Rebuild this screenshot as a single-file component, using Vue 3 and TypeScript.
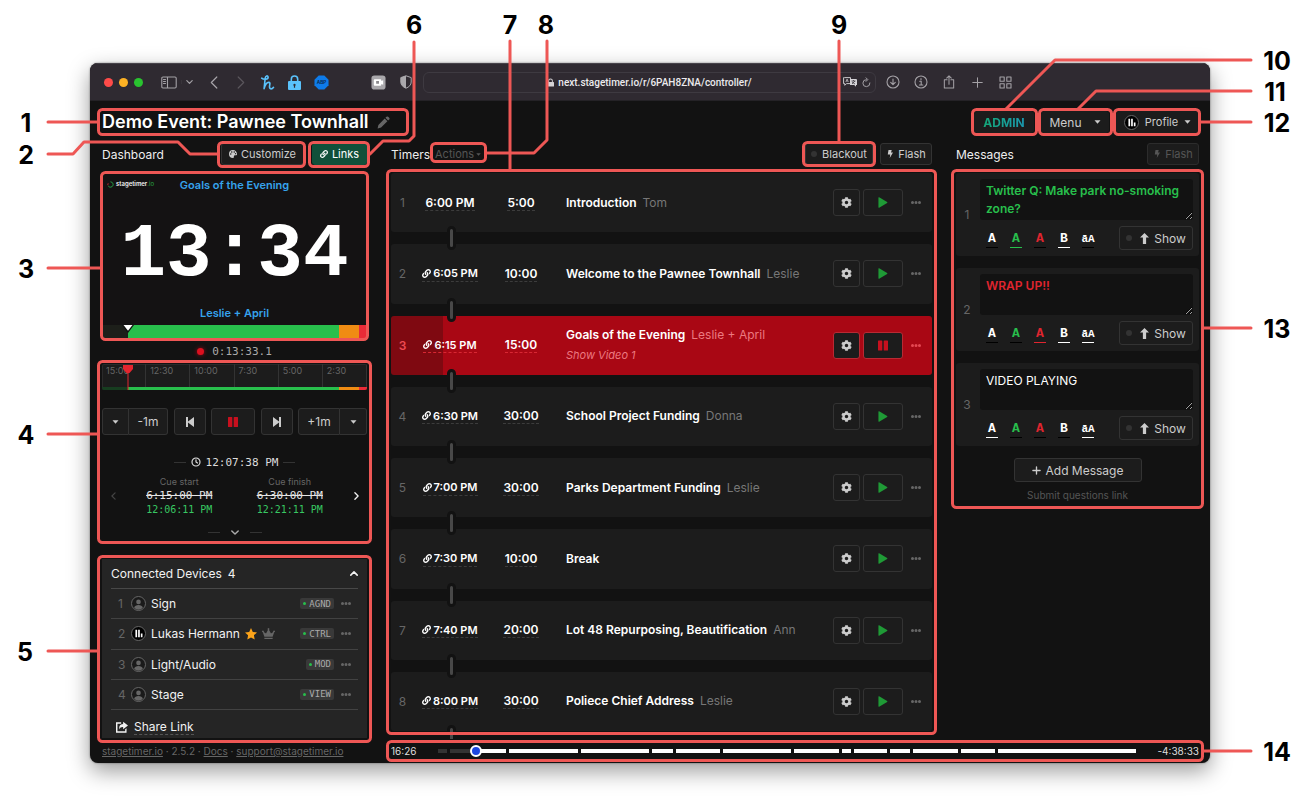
<script setup lang="ts">
import { h, ref } from 'vue'

interface Glyph { box: string; d: string; line?: number }

const glyphs: Record<string, Glyph> = {
  link: { box: '0 0 512 512', d: 'M326.612 185.391c59.747 59.809 58.927 155.698.36 214.59-.11.12-.24.25-.36.37l-67.2 67.2c-59.27 59.27-155.699 59.262-214.96 0-59.27-59.26-59.27-155.7 0-214.96l37.106-37.106c9.84-9.84 26.786-3.3 27.294 10.606.648 17.722 3.826 35.527 9.69 52.721 1.986 5.822.567 12.262-3.783 16.612l-13.087 13.087c-28.026 28.026-28.905 73.66-1.155 101.96 28.024 28.579 74.086 28.749 102.325.51l67.2-67.19c28.191-28.191 28.073-73.757 0-101.83-3.701-3.694-7.429-6.564-10.341-8.569a16.037 16.037 0 0 1-6.947-12.606c-.396-10.567 3.348-21.456 11.698-29.806l21.054-21.055c5.521-5.521 14.182-6.199 20.584-1.731a152.482 152.482 0 0 1 20.522 17.197zM467.547 44.449c-59.261-59.262-155.69-59.27-214.96 0l-67.2 67.2c-.12.12-.25.25-.36.37-58.566 58.892-59.387 154.781.36 214.59a152.454 152.454 0 0 0 20.521 17.196c6.402 4.468 15.064 3.789 20.584-1.731l21.054-21.055c8.35-8.35 12.094-19.239 11.698-29.806a16.037 16.037 0 0 0-6.947-12.606c-2.912-2.005-6.64-4.875-10.341-8.569-28.073-28.073-28.191-73.639 0-101.83l67.2-67.19c28.239-28.239 74.3-28.069 102.325.51 27.75 28.3 26.872 73.934-1.155 101.96l-13.087 13.087c-4.35 4.35-5.769 10.79-3.783 16.612 5.864 17.194 9.042 34.999 9.69 52.721.509 13.906 17.454 20.446 27.294 10.606l37.106-37.106c59.271-59.259 59.271-155.699.001-214.959z' },
  cog: { box: '0 0 512 512', d: 'M487.4 315.7l-42.6-24.6c4.3-23.2 4.3-47 0-70.2l42.6-24.6c4.9-2.8 7.1-8.6 5.5-14-11.1-35.6-30-67.8-54.7-94.6-3.8-4.1-10-5.1-14.8-2.3L380.8 110c-17.9-15.4-38.5-27.3-60.8-35.1V25.8c0-5.6-3.9-10.5-9.4-11.7-36.7-8.2-74.3-7.8-109.2 0-5.5 1.2-9.4 6.1-9.4 11.7V75c-22.2 7.9-42.8 19.8-60.8 35.1L88.7 85.5c-4.9-2.8-11-1.9-14.8 2.3-24.7 26.7-43.6 58.9-54.7 94.6-1.7 5.4.6 11.2 5.5 14L67.3 221c-4.3 23.2-4.3 47 0 70.2l-42.6 24.6c-4.9 2.8-7.1 8.6-5.5 14 11.1 35.6 30 67.8 54.7 94.6 3.8 4.1 10 5.1 14.8 2.3l42.6-24.6c17.9 15.4 38.5 27.3 60.8 35.1v49.2c0 5.6 3.9 10.5 9.4 11.7 36.7 8.2 74.3 7.8 109.2 0 5.5-1.2 9.4-6.1 9.4-11.7v-49.2c22.2-7.9 42.8-19.8 60.8-35.1l42.6 24.6c4.9 2.8 11 1.9 14.8-2.3 24.7-26.7 43.6-58.9 54.7-94.6 1.5-5.5-.7-11.3-5.6-14.1zM256 336c-44.1 0-80-35.9-80-80s35.9-80 80-80 80 35.9 80 80-35.9 80-80 80z' },
  palette: { box: '0 0 16 16', d: 'M8 0a8 8 0 1 0 0 16c1.6 0 2.2-1.2 1.8-2.4-.5-1.5.4-3 2-3H14c1.300 0 2-.9 2-2.300C16 3.500 12.400 0 8 0zM3.500 9.500a1.500 1.500 0 1 1 0-3 1.500 1.500 0 0 1 0 3zM5.500 5.500a1.500 1.500 0 1 1 0-3 1.500 1.500 0 0 1 0 3zM10.500 5.500a1.500 1.500 0 1 1 0-3 1.500 1.500 0 0 1 0 3zM13 8.500a1.200 1.200 0 1 1 0-2.400 1.200 1.200 0 0 1 0 2.400z' },
  bolt: { box: '0 0 16 16', d: 'M5 0h6.500l-1.500 5h4L7.500 16 8.500 9H3.500z' },
  pencil: { box: '0 0 16 16', d: 'M11.700 1a1.400 1.400 0 0 1 2 0L15 2.300a1.400 1.400 0 0 1 0 2L13.700 5.600 10.400 2.300zM9.500 3.200l3.300 3.300L5 14.300 1 15.300.8 15 1.700 11z' },
  caret: { box: '0 0 10 6', d: 'M.5.500h9L5 5.500z' },
  play: { box: '0 0 10 12', d: 'M0 .8Q0 0 .8.400L9.500 5.500Q10 6 9.500 6.500L.8 11.600Q0 12 0 11.200z' },
  pause: { box: '0 0 10 10', d: 'M.6 0h3.100q.600 0 .6.600v8.800q0 .6-.6.600H.6Q0 10 0 9.400V.6Q0 0 .6 0zM6.300 0h3.100q.6 0 .6.600v8.800q0 .6-.6.600H6.300q-.600 0-.6-.6V.6q0-.6.6-.6z' },
  prev: { box: '0 0 8 10', d: 'M0 0h2v4.400L8 0v10L2 5.600V10H0z' },
  next: { box: '0 0 8 10', d: 'M8 0H6v4.400L0 0v10l6-4.400V10h2z' },
  dots: { box: '0 0 10 3', d: 'M1.500 0a1.500 1.500 0 1 1 0 3 1.500 1.500 0 0 1 0-3zM5 0a1.500 1.500 0 1 1 0 3 1.500 1.500 0 0 1 0-3zM8.500 0a1.500 1.500 0 1 1 0 3 1.500 1.500 0 0 1 0-3z' },
  up: { box: '0 0 10 12', d: 'M5 0l5 5H6.800v7H3.200V5H0z' },
  plus: { box: '0 0 10 10', d: 'M5 1v8M1 5h8', line: 1.5 },
  back: { box: '0 0 8 13', d: 'M6.800 1L1.300 6.500 6.800 12', line: 1.2 },
  forward: { box: '0 0 8 13', d: 'M1.200 1L6.700 6.500 1.200 12', line: 1.2 },
  chevronLeft: { box: '0 0 6 10', d: 'M5 1L1 5l4 4', line: 1.5 },
  chevronRight: { box: '0 0 6 10', d: 'M1 1l4 4-4 4', line: 1.6 },
  chevronDown: { box: '0 0 10 6', d: 'M1 1l4 4 4-4', line: 1.8 },
  chevronUp: { box: '0 0 10 6', d: 'M1 5l4-4 4 4', line: 2 },
  clock: { box: '0 0 10 10', d: 'M5 1a4 4 0 1 0 0 8 4 4 0 0 0 0-8zM5 2.800V5l1.500 1', line: 1.2 },
  star: { box: '0 0 12 12', d: 'M6 0l1.800 3.900 4.200.5-3.100 2.900.8 4.200L6 9.500l-3.700 2 .8-4.200L0 4.400l4.200-.5z' },
  crown: { box: '0 0 14 12', d: 'M2.500 10.500h9V12h-9zM2.500 9.500L.8 4.700A1 1 0 1 1 1.700 4.400L4.300 6 6.500 2a1 1 0 1 1 1 0L9.700 6l2.600-1.600a1 1 0 1 1 .9.300L11.500 9.500z' },
  share: { box: '0 0 14 14', d: 'M8.300 1L14 5.300 8.300 9.600V7.100C5.600 7 4.700 8 4.200 9.800 3 6.500 4.600 3.600 8.300 3.500zM6 1.500v1.600H1.700V12h9V9.600l1.600-1.100v5.100H0V1.500z' },
  user: { box: '0 0 14 14', d: 'M7 2.800a2.500 2.500 0 1 1 0 5 2.500 2.500 0 0 1 0-5zM2.300 11.700C2.800 9.300 4.700 8.500 7 8.500s4.200.8 4.700 3.200A6.600 6.600 0 0 1 7 13.700a6.600 6.600 0 0 1-4.700-2z' },
  bars: { box: '0 0 14 14', d: 'M3.700 3h1.800v8H3.700zM6.600 3h1.800v8H6.600zM9.500 7h1.800v4H9.500z' },
  lock: { box: '0 0 12 14', d: 'M2 6V4.200a4 4 0 0 1 8 0V6h1q1 0 1 1v6q0 1-1 1H1q-1 0-1-1V7q0-1 1-1zM3.600 6h4.800V4.200a2.400 2.400 0 0 0-4.800 0z' },
  keyLock: { box: '0 0 13 15', d: 'M2.500 6V4.200a4 4 0 0 1 8 0V6H12q1 0 1 1v7q0 1-1 1H1q-1 0-1-1V7q0-1 1-1zM4.100 6h4.800V4.200a2.400 2.400 0 0 0-4.800 0zM6.500 8.700a1.200 1.200 0 0 0-.6 2.200V12.800h1.200v-1.900a1.200 1.200 0 0 0-.6-2.200z' },
  sidebar: { box: '0 0 16 13', d: 'M2 1h12q1.200 0 1.200 1.200v8.600Q15.200 12 14 12H2Q.8 12 .8 10.800V2.200Q.8 1 2 1zM6.500 1v11M2.500 3.500h2M2.500 5.500h2M2.500 7.500h2', line: 1.1 },
  honey: { box: '0 0 14 15', d: 'M1.200 3.200C3 4.800 7.800 4.800 7.600 2.200 7.400.2 5 .6 4.700 3L3.600 13.600C4.600 9.800 6.200 7.400 8.200 7.400c2.300 0 .6 2.900.8 4.700.2 2.300 2.600 2.300 4 .2', line: 1.6 },
  reload: { box: '0 0 10 12', d: 'M8.800 6.500A3.900 3.900 0 1 1 5 2.800M4.500.8L6.500 2.800 4.500 4.800', line: 1.1 },
  download: { box: '0 0 14 14', d: 'M7 1a6 6 0 1 0 0 12A6 6 0 0 0 7 1zM7 4v5.500M4.700 7.400L7 9.700l2.300-2.300', line: 1.1 },
  info: { box: '0 0 14 14', d: 'M7 1a6 6 0 1 0 0 12A6 6 0 0 0 7 1zM5.700 6.200H7.200V10M5.400 10h3.400M7 3.600v1.200', line: 1.1 },
  upload: { box: '0 0 12 15', d: 'M4 5H1v9h10V5H8M6 10V1M3.500 3.300L6 .9l2.500 2.400', line: 1.1 },
  tabPlus: { box: '0 0 12 12', d: 'M6 .8v10.400M.8 6h10.400', line: 1.1 },
  grid: { box: '0 0 13 13', d: 'M1 1h4.200v4.200H1zM7.800 1H12v4.200H7.800zM1 7.800h4.200V12H1zM7.800 7.800H12V12H7.800z', line: 1.1 },
}

const Icon = (props: { name: string }) => {
  const g = glyphs[props.name]
  const paint = g.line
    ? { fill: 'none', stroke: 'currentColor', 'stroke-width': g.line, 'stroke-linecap': 'round', 'stroke-linejoin': 'round' }
    : { fill: 'currentColor', 'fill-rule': 'evenodd' }
  return h('svg', { viewBox: g.box, 'aria-hidden': 'true' }, [h('path', { d: g.d, ...paint })])
}
Icon.props = ['name']

const address = ref('next.stagetimer.io/r/6PAH8ZNA/controller/')

const timers = [
  { time: '6:00 PM', length: '5:00', title: 'Introduction', who: 'Tom' },
  { time: '6:05 PM', length: '10:00', title: 'Welcome to the Pawnee Townhall', who: 'Leslie', linked: true },
  { time: '6:15 PM', length: '15:00', title: 'Goals of the Evening', who: 'Leslie + April', linked: true, note: 'Show Video 1', active: true },
  { time: '6:30 PM', length: '30:00', title: 'School Project Funding', who: 'Donna', linked: true },
  { time: '7:00 PM', length: '30:00', title: 'Parks Department Funding', who: 'Leslie', linked: true },
  { time: '7:30 PM', length: '10:00', title: 'Break', who: '', linked: true },
  { time: '7:40 PM', length: '20:00', title: 'Lot 48 Repurposing, Beautification', who: 'Ann', linked: true },
  { time: '8:00 PM', length: '30:00', title: 'Poliece Chief Address', who: 'Leslie', linked: true },
]

const messages = ref([
  { text: 'Twitter Q: Make park no-smoking zone?', tone: 'green', bold: true, caps: false },
  { text: 'WRAP UP!!', tone: 'red', bold: true, caps: true },
  { text: 'VIDEO PLAYING', tone: 'white', bold: false, caps: true },
])

const devices = [
  { name: 'Sign', role: 'AGND' },
  { name: 'Lukas Hermann', role: 'CTRL', owner: true },
  { name: 'Light/Audio', role: 'MOD' },
  { name: 'Stage', role: 'VIEW' },
]

const marks = ['15:00', '12:30', '10:00', '7:30', '5:00', '2:30']

const progress = ref(46)
const segments = [
  { size: 9, played: 100 }, { size: 57, played: 46 }, { size: 69 }, { size: 69 }, { size: 21 },
  { size: 45 }, { size: 69 }, { size: 45 }, { size: 9 }, { size: 33 }, { size: 21 },
  { size: 45 }, { size: 34 }, { size: 140 },
]

const frames = [
  [98, 109, 309, 25], [218, 142, 86, 24], [309, 142, 59, 24], [101, 172, 266, 167],
  [98, 361, 272, 181], [98, 556, 272, 185], [387, 170, 548, 563], [431, 143, 54, 18],
  [803, 142, 71, 23], [972, 109, 64, 25], [1039, 109, 72, 25], [1114, 109, 85, 25],
  [952, 170, 250, 337], [387, 741, 815, 19],
]
const leaders = [
  'M48 122H98', 'M48 154H73L84 142H178L190 154H218', 'M48 268H101', 'M48 434H98', 'M48 651H98',
  'M414 42V136L409 141H383L370 154', 'M510 41V170', 'M547 41V140L534 153H486', 'M839 41V142',
  'M1251 60H1055L1006 109', 'M1251 91H1096L1078 109', 'M1251 122H1200', 'M1203 328H1251', 'M1203 751H1251',
]
const labels: [string, number, number][] = [
  ['1', 26, 131], ['2', 26, 163], ['3', 26, 277], ['4', 26, 443], ['5', 25, 660],
  ['6', 414, 33], ['7', 510, 33], ['8', 546, 33], ['9', 839, 33],
  ['10', 1277, 69], ['11', 1275, 100], ['12', 1277, 131], ['13', 1277, 337], ['14', 1277, 760],
]
</script>

<template>
  <div class="stage">
    <div class="window">
      <div class="toolbar">
        <div class="lights"><i class="close"></i><i class="mini"></i><i class="full"></i></div>
        <button class="tb side" aria-label="Sidebar"><Icon name="sidebar" /></button>
        <button class="tb drop" aria-label="Tab groups"><Icon name="chevronDown" /></button>
        <div class="slots">
          <button class="tb nav" aria-label="Back"><Icon name="back" /></button>
          <button class="tb nav dim" aria-label="Forward"><Icon name="forward" /></button>
          <button class="tb blue" aria-label="Coupons"><Icon name="honey" /></button>
          <button class="tb blue key" aria-label="Passwords"><Icon name="keyLock" /></button>
          <button class="tb" aria-label="Ad blocker"><svg viewBox="0 0 16 16"><path d="M5 .5h6L15.500 5v6L11 15.500H5L.5 11V5z" fill="#0e7bea" /><text x="8" y="10" text-anchor="middle" class="abp">ABP</text></svg></button>
        </div>
        <div class="slots second">
          <button class="tb" aria-label="Camera"><svg viewBox="0 0 16 16"><rect x=".5" y=".5" width="15" height="15" rx="3" fill="#a9a7ab" /><path d="M4 4.500h6q1 0 1 1v1l2-1v5l-2-1v1q0 1-1 1H4q-1 0-1-1v-5q0-1 1-1z" fill="#fff" /><path d="M5.500 6.300h3v3h-3z" fill="#8b898d" /></svg></button>
          <button class="tb shield" aria-label="Privacy report"><svg viewBox="0 0 12 14"><path d="M6 .8L11.200 2.600V7c0 3-2.200 5-5.200 6.200C3 12 .8 10 .8 7V2.600z" fill="none" stroke="#aaa8ac" /><path d="M6 .8V13.200C3 12 .8 10 .8 7V2.600z" fill="#aaa8ac" /></svg></button>
        </div>
        <div class="address">
          <span></span>
          <label class="url"><Icon name="lock" /><input v-model="address" type="text" aria-label="Address" /></label>
          <span class="inside">
            <button class="tb translate" aria-label="Translate"><svg viewBox="0 0 14 10"><path d="M1.500.6h6v6h-4L1.800 8.300V6.600H.6V.6z" fill="none" stroke="#c9c7cb" /><path d="M2.800 5l1.300-3L5.300 5M3.300 4h1.500" fill="none" stroke="#c9c7cb" stroke-width=".7" /><path d="M7 2h6q1 0 1 1v5h-1v1.800L11.200 8H7z" fill="#d5d3d7" /><path d="M8.500 4h4M10.500 3v1M9 7l3-3M9 5l3 2" stroke="#2f2b32" stroke-width=".7" /></svg></button>
            <button class="tb reload" aria-label="Reload"><Icon name="reload" /></button>
          </span>
        </div>
        <div class="slots end">
          <button v-for="n in ['download', 'info', 'upload', 'tabPlus', 'grid']" :key="n" class="tb" :class="n" :aria-label="n"><Icon :name="n" /></button>
        </div>
      </div>

      <main class="app">
        <header class="top">
          <h1>Demo Event: Pawnee Townhall</h1>
          <button class="plain pencil" aria-label="Rename"><Icon name="pencil" /></button>
          <div class="account">
            <button class="btn admin"><span>ADMIN</span></button>
            <button class="btn menu">Menu<Icon name="caret" class="caret" /></button>
            <button class="btn profile"><span class="avatar logo"><Icon name="bars" /></span>Profile<Icon name="caret" class="caret" /></button>
          </div>
        </header>

        <div class="columns">
          <section class="column">
            <div class="bar">
              <h2>Dashboard</h2>
              <button class="btn small push customize"><Icon name="palette" />Customize</button>
              <button class="btn small links"><Icon name="link" />Links</button>
            </div>

            <div class="preview">
              <div class="brand"><svg viewBox="0 0 10 10"><path d="M5 1.200A3.800 3.800 0 1 1 1.800 7.200" fill="none" stroke="#25b14b" stroke-width="1.300" /><path d="M1.300 6A3.800 3.800 0 0 1 1.700 3.300" fill="none" stroke="#d32f2f" stroke-width="1.300" /></svg>stagetimer<em>.io</em></div>
              <p class="caption">Goals of the Evening</p>
              <p class="count">13:34</p>
              <p class="caption">Leslie + April</p>
              <div class="track"><i class="past"></i><i class="go"></i><i class="warn"></i><i class="stop"></i><svg class="pin" viewBox="0 0 12 8"><path d="M0 0h12L6 8z" fill="#111" /><path d="M1.500 0h9L6 5.800z" fill="#fff" /></svg></div>
            </div>

            <div class="elapsed"><i></i>0:13:33.1</div>

            <div class="ruler">
              <span v-for="m in marks" :key="m">{{ m }}</span>
              <div class="track"><i class="past"></i><i class="go"></i><i class="warn"></i><i class="stop"></i></div>
              <svg class="head" viewBox="0 0 12 26"><path d="M1 1h10v4L7.500 9H6.500v17h-1V9h-1L1 5z" fill="#e5252f" /></svg>
            </div>

            <div class="controls">
              <div class="pair"><button class="btn thin" aria-label="Less options"><Icon name="caret" class="caret" /></button><button class="btn step">-1m</button></div>
              <button class="btn skip" aria-label="Previous"><Icon name="prev" /></button>
              <button class="btn hold" aria-label="Pause"><Icon name="pause" /></button>
              <button class="btn skip" aria-label="Next"><Icon name="next" /></button>
              <div class="pair"><button class="btn step more">+1m</button><button class="btn thin" aria-label="More options"><Icon name="caret" class="caret" /></button></div>
            </div>

            <div class="now"><hr /><Icon name="clock" /><span>12:07:38 PM</span><hr /></div>

            <div class="cues">
              <button class="plain off" aria-label="Previous cue"><Icon name="chevronLeft" /></button>
              <div><small>Cue start</small><s>6:15:00 PM</s><b>12:06:11 PM</b></div>
              <div><small>Cue finish</small><s>6:30:00 PM</s><b>12:21:11 PM</b></div>
              <button class="plain" aria-label="Next cue"><Icon name="chevronRight" /></button>
            </div>

            <div class="fold"><hr /><button class="plain" aria-label="Expand"><Icon name="chevronDown" /></button><hr /></div>

            <div class="devices">
              <div class="heading"><h3>Connected Devices</h3><span>4</span><button class="plain push" aria-label="Collapse"><Icon name="chevronUp" /></button></div>
              <div v-for="(d, i) in devices" :key="d.name" class="device">
                <span class="index">{{ i + 1 }}</span>
                <span class="avatar" :class="{ logo: d.owner }"><Icon :name="d.owner ? 'bars' : 'user'" /></span>
                <span>{{ d.name }}</span>
                <template v-if="d.owner"><Icon name="star" class="star" /><Icon name="crown" class="crown" /></template>
                <span class="role push"><i></i>{{ d.role }}</span>
                <button class="plain dots" aria-label="Device options"><Icon name="dots" /></button>
              </div>
              <div class="sharing"><Icon name="share" /><a href="#share">Share Link</a></div>
            </div>
          </section>

          <section class="column">
            <div class="bar">
              <h2>Timers</h2>
              <button class="plain actions">Actions<Icon name="caret" class="caret" /></button>
              <button class="btn small push blackout"><i class="led"></i>Blackout</button>
              <button class="btn small flash"><Icon name="bolt" />Flash</button>
            </div>
            <ol class="timers">
              <li v-for="(t, i) in timers" :key="t.time" :class="{ active: t.active }">
                <span class="index">{{ i + 1 }}</span>
                <span class="cell"><span class="dash" :class="{ linked: t.linked }"><Icon v-if="t.linked" name="link" />{{ t.time }}</span></span>
                <span class="cell"><span class="dash">{{ t.length }}</span></span>
                <div class="name"><p><b>{{ t.title }}</b><span>{{ t.who }}</span></p><p v-if="t.note" class="note">{{ t.note }}</p></div>
                <button class="btn gear" aria-label="Settings"><Icon name="cog" /></button>
                <button class="btn run" :aria-label="t.active ? 'Pause' : 'Start'"><Icon :name="t.active ? 'pause' : 'play'" /></button>
                <button class="plain dots" aria-label="Timer options"><Icon name="dots" /></button>
                <i class="joint"></i>
              </li>
            </ol>
          </section>

          <section class="column">
            <div class="bar">
              <h2>Messages</h2>
              <button class="btn small push flash faint" disabled><Icon name="bolt" />Flash</button>
            </div>
            <div class="messages">
              <article v-for="(m, i) in messages" :key="i" class="message">
                <span class="index">{{ i + 1 }}</span>
                <div class="editor">
                  <textarea v-model="m.text" :class="[m.tone, { bold: m.bold }]" :aria-label="'Message ' + (i + 1)"></textarea>
                  <div class="tools">
                    <button class="tool white" :class="{ on: m.tone === 'white' }">A</button>
                    <button class="tool green" :class="{ on: m.tone === 'green' }">A</button>
                    <button class="tool red" :class="{ on: m.tone === 'red' }">A</button>
                    <button class="tool white" :class="{ on: m.bold }">B</button>
                    <button class="tool white" :class="{ on: m.caps }">āA</button>
                    <button class="btn show push"><i class="led"></i><Icon name="up" />Show</button>
                  </div>
                </div>
              </article>
              <button class="btn add"><Icon name="plus" />Add Message</button>
              <a class="submit" href="#questions">Submit questions link</a>
            </div>
          </section>
        </div>

        <footer class="bottom">
          <p class="about"><a href="#home">stagetimer.io</a> · 2.5.2 · <a href="#docs">Docs</a> · <a href="#support">support@stagetimer.io</a></p>
          <div class="overall">
            <span>16:26</span>
            <div class="segments">
              <i v-for="(s, i) in segments" :key="i" :style="{ flexGrow: s.size }"><u :style="{ width: (s.played ?? 0) + '%' }"></u></i>
              <input v-model="progress" type="range" min="0" max="1000" aria-label="Event progress" />
            </div>
            <span class="left">-4:38:33</span>
          </div>
        </footer>
      </main>
    </div>

    <svg class="callouts" viewBox="0 0 1300 800" preserveAspectRatio="xMidYMin meet">
      <g fill="none" stroke="#ee5755" stroke-width="3" stroke-linecap="round" stroke-linejoin="round">
        <path v-for="l in leaders" :key="l" :d="l" />
        <rect v-for="(f, i) in frames" :key="i" :x="f[0] + 0.5" :y="f[1] + 0.5" :width="f[2]" :height="f[3]" rx="4" />
      </g>
      <text v-for="l in labels" :key="l[0]" :x="l[1]" :y="l[2] + 1" text-anchor="middle">{{ l[0] }}</text>
    </svg>
  </div>
</template>

<style>
body { margin: 0; background: #fff; }
</style>

<style scoped>
* { box-sizing: border-box; }
.stage { position: relative; display: flex; min-height: 100vh; padding: 63px 90px 37px; font-family: Inter, "Open Sans", sans-serif; font-size: 12px; color: #f2f2f2; }
h1, h2, h3, p, ol, hr { margin: 0; padding: 0; font-weight: 400; }
button { font: inherit; color: inherit; padding: 0; margin: 0; border: 0; background: none; display: flex; align-items: center; justify-content: center; white-space: nowrap; }
svg { display: block; flex: none; }
a { color: inherit; }
hr { border: 0; height: 1px; background: #333; }
.push { margin-left: auto; }

.window { flex: 1; display: flex; flex-direction: column; min-width: 0; border-radius: 8px; overflow: hidden; background: #121212; box-shadow: 0 8px 22px rgba(0, 0, 0, .4), 0 0 2px rgba(0, 0, 0, .5); }

.toolbar { display: flex; align-items: center; height: 38px; padding: 0 191px 0 14px; background: #2f2a31; border-top: 1px solid #47434a; border-bottom: 1px solid #242226; }
.lights { display: flex; gap: 6px; }
.lights i { width: 9px; height: 9px; border-radius: 50%; }
.close { background: #fe4b49; }
.mini { background: #fdb124; }
.full { background: #29c32f; }
.tb { color: #a4a1a6; }
.side { margin-left: 18px; }
.side svg { width: 16px; height: 13px; }
.drop { width: 15px; margin-left: 4px; border-left: 1px solid #39353b; }
.drop svg { width: 7px; height: 4px; }
.slots { display: flex; margin-left: 4px; }
.slots .tb { width: 27px; }
.slots svg { width: 15px; height: 15px; }
.slots .nav svg { width: 8px; height: 13px; }
.slots .dim { color: #59555b; }
.slots .blue { color: #5ac2fb; }
.slots .key svg { width: 13px; height: 15px; }
.slots .shield svg { width: 12px; height: 14px; }
.abp { font: 700 5px Inter, sans-serif; fill: #0a2c59; }
.second { margin: 0 4px 0 30px; }
.address { flex: 1; display: grid; grid-template-columns: 1fr auto 1fr; align-items: center; height: 21px; border: 1px solid #3e3a41; border-radius: 6px; }
.url { display: flex; align-items: center; gap: 4px; color: #d5d3d6; }
.url svg { width: 7px; height: 9px; }
.url input { field-sizing: content; padding: 0; border: 0; background: none; font: 500 10px Roboto, sans-serif; color: #eceaed; outline: 0; }
.inside { display: flex; justify-content: flex-end; align-items: center; gap: 5px; padding-right: 4px; }
.translate svg { width: 14px; height: 10px; }
.reload svg { width: 9px; height: 11px; }
.end { margin-left: 3px; }
.end .tb { width: 28px; }
.end svg { width: 14px; height: 14px; }
.end .tabPlus svg { width: 11px; height: 11px; }
.end .grid svg { width: 13px; height: 13px; }

.app { flex: 1; display: flex; flex-direction: column; padding: 7px 11px 0 12px; }
.top { display: flex; align-items: center; height: 28px; }
h1 { font-size: 18px; font-weight: 600; line-height: 28px; color: #fff; }
.pencil { margin-left: 8px; color: #666; }
.pencil svg { width: 13px; height: 13px; }
.btn { border: 1px solid #333; border-radius: 3px; background: #1c1c1c; color: #ccc; }
.caret { width: 7px; height: 4px; }
.account { display: flex; gap: 7px; margin-left: auto; }
.account .btn { height: 22px; border-color: #1c1c1c; }
.admin { width: 60px; font-size: 12px; font-weight: 700; }
.admin span { background: linear-gradient(90deg, #14a878, #1a98b0); background-clip: text; color: transparent; }
.menu { width: 68px; gap: 12px; font-size: 12px; }
.profile { width: 83px; gap: 6px; font-size: 11px; }
.avatar { display: flex; align-items: center; justify-content: center; width: 15px; height: 15px; border: 1px solid #666; border-radius: 50%; background: #1a1a1a; color: #666; }
.avatar svg { width: 13px; height: 13px; }
.avatar.logo { background: #000; color: #fff; }

.columns { flex: 1; display: grid; grid-template-columns: 265px 1fr 243px; gap: 24px; padding-top: 7px; }
.column { display: flex; flex-direction: column; min-width: 0; }
.bar { display: flex; align-items: center; height: 22px; margin-bottom: 8px; }
h2 { font-size: 12px; color: #eee; }
.small { height: 22px; gap: 4px; font-size: 11px; }
.small svg { width: 8px; height: 8px; }
.customize { width: 83px; }
.links { width: 55px; margin-left: 8px; background: #11503a; border-color: #11503a; color: #fff; }
.actions { margin-left: 5px; gap: 2px; font-size: 11px; color: #555; }
.actions .caret { width: 5px; height: 3px; }
.led { width: 6px; height: 6px; border-radius: 50%; background: #333; }
.blackout { width: 68px; gap: 5px; }
.flash { width: 52px; margin-left: 7px; }
.flash.push { margin-left: auto; }
.faint { color: #555; border-color: #2c2c2c; }

.preview { position: relative; display: flex; flex-direction: column; height: 165px; background: #141213; text-align: center; }
.brand { position: absolute; top: 7px; left: 5px; display: flex; align-items: center; gap: 2px; font-size: 6px; font-weight: 600; line-height: 8px; }
.brand svg { width: 7px; height: 7px; }
.brand em { margin-left: -2px; font-style: normal; font-weight: 400; color: #28a745; }
.caption { font-size: 11px; font-weight: 600; line-height: 24px; color: #36a3ec; }
.count { flex: 1; padding-top: 12px; font: 700 76px/92px "Liberation Mono", monospace; color: #fff; }
.track { display: flex; }
.track i:nth-child(1) { flex: 26; }
.track i:nth-child(2) { flex: 211; }
.track i:nth-child(3) { flex: 20; }
.track i:nth-child(4) { flex: 8; }
.past { background: #1d1f1a; }
.go { background: #28bf4c; }
.warn { background: #f08c13; }
.stop { background: #e92b37; }
.preview .track { position: relative; height: 13px; }
.pin { position: absolute; left: 20px; top: 0; width: 12px; height: 8px; }
.elapsed { display: flex; align-items: center; justify-content: center; gap: 8px; height: 26px; font: 11px "DejaVu Sans Mono", monospace; color: #aaa; }
.elapsed i { width: 7px; height: 7px; border-radius: 50%; background: #dc101f; box-shadow: 0 0 4px #a00a16; }
.ruler { position: relative; display: grid; grid-template-columns: repeat(6, 1fr); height: 26px; border-radius: 2px; overflow: hidden; background: #1c1c1c; box-shadow: inset 0 0 0 1px #2a2a2a; font-size: 9px; line-height: 13px; color: #666; }
.ruler > span { padding-left: 4px; border-right: 1px solid #333; }
.ruler .track { position: absolute; left: 0; right: 0; bottom: 0; height: 3px; }
.ruler .past { background: #173d20; }
.head { position: absolute; left: 20px; top: 0; width: 12px; height: 26px; }
.controls { display: flex; justify-content: space-between; margin-top: 18px; }
.controls .btn { height: 27px; }
.pair { display: flex; }
.pair .btn:first-child { border-radius: 3px 0 0 3px; }
.pair .btn:last-child { border-radius: 0 3px 3px 0; border-left: 0; }
.thin { width: 27px; }
.step { width: 39px; font-size: 12px; }
.more { width: 42px; }
.skip { width: 32px; }
.skip svg { width: 8px; height: 10px; }
.hold { width: 44px; color: #c8101e; }
.hold svg { width: 10px; height: 10px; }
.now { display: flex; align-items: center; justify-content: center; gap: 5px; height: 20px; margin-top: 17px; font: 11px "DejaVu Sans Mono", monospace; color: #ddd; }
.now svg { width: 10px; height: 10px; }
.now hr, .fold hr { width: 12px; }
.cues { display: grid; grid-template-columns: 22px 1fr 1fr 22px; margin-top: 3px; text-align: center; line-height: 14px; }
.cues div { display: flex; flex-direction: column; }
.cues small { font-size: 9px; color: #666; }
.cues s { font: 11px/14px "DejaVu Sans Mono", monospace; color: #e5e5e5; }
.cues b { font: 10px/14px "DejaVu Sans Mono", monospace; color: #38c762; }
.cues svg { width: 5px; height: 8px; }
.cues .off { color: #444; }
.fold { display: flex; align-items: center; justify-content: center; gap: 11px; height: 16px; margin-top: 7px; }
.fold svg { width: 8px; height: 5px; color: #aaa; }

.devices { flex: 1; display: flex; flex-direction: column; margin: 19px 0 1px; padding: 0 9px; background: #252525; }
.heading { display: flex; align-items: center; gap: 6px; height: 30px; border-bottom: 1px solid #484848; }
h3 { font-size: 12px; }
.heading svg { width: 8px; height: 5px; }
.device { flex: 1; display: flex; align-items: center; gap: 5px; padding: 0 7px; border-bottom: 1px solid #424242; }
.index { color: #666; }
.device .index { width: 8px; }
.star { width: 12px; height: 12px; color: #faa31a; }
.crown { width: 13px; height: 11px; color: #666; }
.role { display: flex; align-items: center; gap: 3px; height: 11px; padding: 0 3px; border-radius: 2px; background: #393939; font: 9px "DejaVu Sans Mono", monospace; color: #aaa; }
.role i { width: 3px; height: 3px; border-radius: 50%; background: #28bf4c; }
.dots { color: #666; }
.dots svg { width: 10px; height: 3px; }
.device .dots { margin-left: 2px; }
.sharing { display: flex; align-items: center; gap: 6px; height: 28px; padding: 6px 0 0 5px; }
.sharing svg { width: 12px; height: 12px; }
.sharing a { text-decoration: none; border-bottom: 1px dashed #555; line-height: 15px; }

.timers { flex: 1; display: flex; flex-direction: column; gap: 12px; padding-bottom: 8px; overflow: hidden; list-style: none; }
.timers li { position: relative; flex: 1; display: grid; grid-template-columns: 23px 72px 70px 1fr 27px 43px 18px; align-items: center; padding-right: 11px; border-radius: 3px; background: #1c1c1c; }
.timers .index { text-align: center; }
.cell { text-align: center; font-weight: 600; color: #fff; }
.dash { display: inline-flex; align-items: center; gap: 2px; height: 16px; border-bottom: 1px dashed #3c3c3c; }
.linked { font-size: 11px; }
.linked svg { width: 9px; height: 9px; }
.name { padding-left: 10px; white-space: nowrap; color: #777; }
.name p { line-height: 20px; }
.name b { margin-right: 6px; font-weight: 600; color: #fff; }
.name .note { font-size: 11px; font-style: italic; }
.gear, .run { height: 27px; }
.gear svg { width: 11px; height: 11px; }
.run { width: 40px; margin-left: 3px; color: #1f9a36; }
.run svg { width: 10px; height: 11px; }
.timers .dots { margin-left: 8px; }
.timers .active { background: linear-gradient(90deg, #7f0911 52px, #a90714 52px); }
.active .index { color: #ee4952; font-weight: 600; }
.active .dash { border-color: #d82733; }
.active .name { color: #ec7980; }
.active .name b { color: #fff; }
.active .btn { border-color: #b82a33; }
.active .run { color: #c8101e; }
.timers .active .dots { color: #e54852; }
.joint { position: absolute; left: 56px; bottom: -18px; z-index: 1; width: 9px; height: 24px; border: 3px solid #121212; border-radius: 5px; background: #484848; }

.messages { display: flex; flex-direction: column; align-items: stretch; gap: 12px; }
.message { display: flex; align-items: center; gap: 8px; padding: 6px; border-radius: 3px; background: #1c1c1c; }
.message .index { width: 10px; text-align: center; }
.editor { flex: 1; min-width: 0; }
textarea { display: block; width: 100%; height: 41px; padding: 3px 6px; border: 0; border-radius: 3px; background: #121212; font: 12px/18px Inter, sans-serif; resize: vertical; overflow: hidden; outline: 0; color-scheme: dark; }
textarea.bold { font-weight: 600; }
.white { color: #fff; }
.green { color: #28bf4c; }
.red { color: #e0252f; }
.tools { display: flex; align-items: center; gap: 12px; margin-top: 6px; padding-left: 6px; }
.tool { width: 12px; height: 17px; margin-top: 2px; border-bottom: 1px solid #000; font: 700 13px "Liberation Mono", monospace; }
.tool:nth-child(5) { font-size: 11px; }
.tool.on { border-color: currentColor; }
.show { width: 74px; height: 24px; gap: 5px; }
.show .led { margin-right: 3px; }
.show svg { width: 9px; height: 11px; }
.add { align-self: center; width: 128px; height: 24px; gap: 5px; }
.add svg { width: 9px; height: 9px; }
.submit { align-self: center; margin-top: -6px; font-size: 10px; line-height: 14px; text-decoration: none; color: #555; }

.bottom { display: grid; grid-template-columns: 265px 1fr; gap: 24px; align-items: center; height: 24px; font-size: 10px; }
.about { white-space: nowrap; color: #666; }
.overall { display: flex; align-items: center; color: #ddd; }
.overall span { width: 47px; }
.overall .left { width: 63px; text-align: right; }
.segments { position: relative; flex: 1; display: flex; align-items: center; gap: 3px; height: 12px; }
.segments i { flex: 1 1 0; height: 4px; background: #fff; }
.segments u { display: block; height: 4px; background: #333; }
.segments input { position: absolute; left: 0; top: 0; width: 100%; height: 12px; margin: 0; appearance: none; background: none; }
.segments input::-webkit-slider-thumb { appearance: none; width: 12px; height: 12px; border: 2px solid #fff; border-radius: 50%; background: #1d46df; }

.callouts { position: absolute; inset: 0; z-index: 2; width: 100%; height: 100%; pointer-events: none; }
.callouts text { font: 700 25px Inter, sans-serif; fill: #000; }
</style>
